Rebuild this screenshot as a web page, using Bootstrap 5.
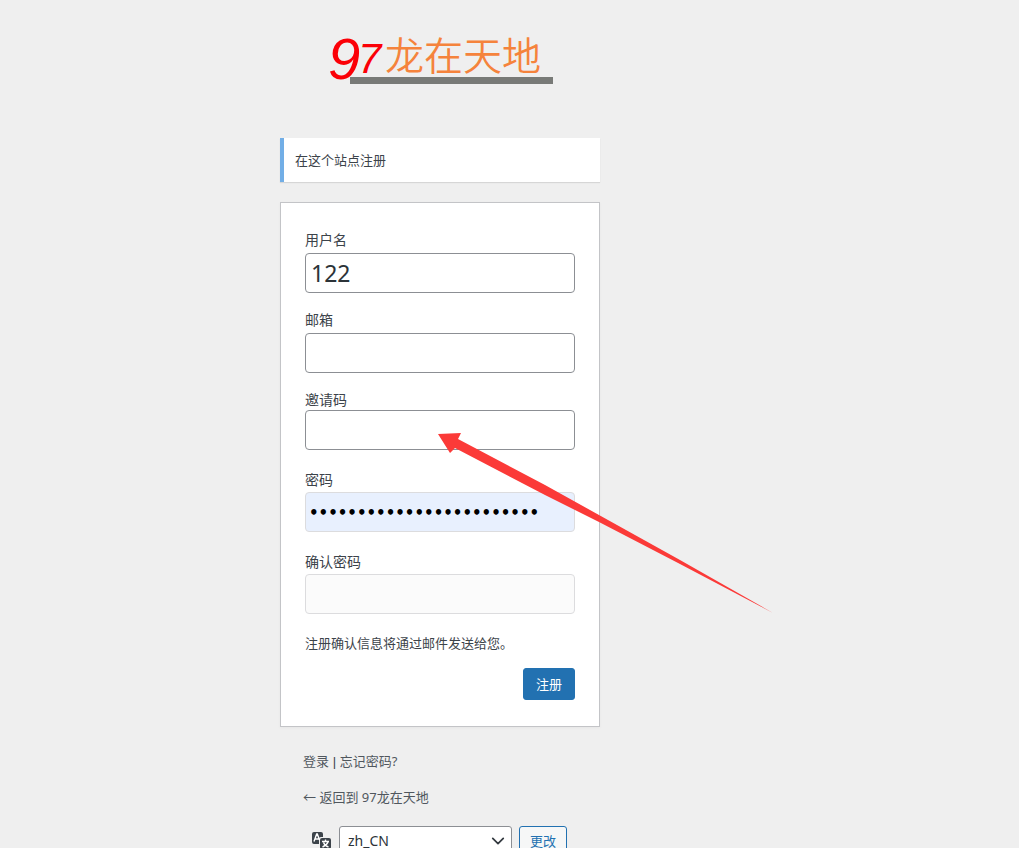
<!DOCTYPE html>
<html lang="zh-CN">
<head>
<meta charset="utf-8">
<meta name="viewport" content="width=device-width, initial-scale=1">
<title>注册 - 97龙在天地</title>
<link href="https://cdn.jsdelivr.net/npm/bootstrap@5.3.0/dist/css/bootstrap.min.css" rel="stylesheet">
<style>
  body { background: #efefef; color: #3c434a; font: 13px/20px "Noto Sans", "Noto Sans CJK SC", sans-serif; }
  .page { padding: 32px 139px 0 0; }
  .login { width: 320px; }
  .logo { height: 52px; margin: 0 24px 54px 48px; }
  .logo-nine, .logo-seven { color: #fb0007; font-family: "Liberation Sans", sans-serif; font-style: italic; }
  .logo-nine { font-size: 58px; line-height: 54px; width: 30px; }
  .logo-seven { font-size: 42px; line-height: 54px; width: 27px; }
  .logo-name { color: #f5833c; font-family: "Noto Sans CJK SC", sans-serif; font-weight: 350; font-size: 39px; line-height: 42px; }
  .logo-bar { height: 7px; left: 22px; right: 23px; bottom: 0; background: #787a77; z-index: -1; }
  .notice { border-left: 4px solid #72aee6; padding: 12px 11px; box-shadow: 0 1px 1px rgba(0,0,0,.1); }
  .signup { margin-top: 20px; padding: 27px 24px 26px; border: 1px solid #c3c4c7; box-shadow: 0 1px 3px rgba(0,0,0,.04); }
  .signup label { font-size: 14px; line-height: 20px; }
  .signup .form-control { height: 40px; padding: 0 5px; border-color: #8c8f94; border-radius: 4px; color: #2c3338; font-size: 23px; line-height: 32px; }
  .signup .filled { background: #e8f0fe; border-color: #dcdcde; color: #000; font-family: "DejaVu Sans", sans-serif; font-weight: 700; font-size: 15px; padding: 2px 3px 0; }
  .signup .empty { background: #fbfbfb; border-color: #dcdcde; }
  .wide-gap { gap: 3px; margin-bottom: 17px; }
  .no-gap { margin-bottom: 20px; }
  .slim-gap { gap: 2px; margin-bottom: 20px; }
  .hint { margin-top: -1px; }
  .btn { --bs-btn-font-size: 13px; --bs-btn-line-height: 20px; --bs-btn-border-radius: 3px; }
  .btn-send { --bs-btn-padding-x: 12px; --bs-btn-padding-y: 5px; --bs-btn-bg: #2271b1; --bs-btn-border-color: #2271b1; margin-top: 15px; }
  .btn-change { --bs-btn-padding-x: 10px; --bs-btn-padding-y: 4px; --bs-btn-bg: #f6f7f7; --bs-btn-color: #2271b1; --bs-btn-border-color: #2271b1; }
  .foot-links { padding: 0 23px; margin-top: 24px; gap: 15px; }
  .foot-links a { color: #50575e; }
  .divider { font-family: "Liberation Sans", sans-serif; }
  .language { margin: 19px 33px 24px 31px; gap: 7px; }
  .language .form-select { height: 30px; padding: 0 24px 0 8px; border-color: #8c8f94; border-radius: 3px; color: #2c3338; font-size: 14px; line-height: 28px; background-position: right 6px center; background-size: 14px 14px; }
  .pointer { left: 157px; top: 230px; }
</style>
</head>
<body class="vh-100 overflow-hidden">
<main class="page">
  <div class="login mx-auto">
    <a href="#" class="logo d-flex position-relative text-decoration-none z-1" aria-label="97龙在天地">
      <span class="logo-nine">9</span><span class="logo-seven">7</span><span class="logo-name">龙在天地</span>
      <span class="logo-bar position-absolute"></span>
    </a>
    <div class="notice bg-white"><p class="mb-0">在这个站点注册</p></div>
    <form class="signup bg-white position-relative">
      <div class="d-flex flex-column wide-gap">
        <label for="user">用户名</label>
        <input id="user" type="text" class="form-control" value="122">
      </div>
      <div class="d-flex flex-column wide-gap">
        <label for="email">邮箱</label>
        <input id="email" type="email" class="form-control">
      </div>
      <div class="d-flex flex-column no-gap">
        <label for="invite">邀请码</label>
        <input id="invite" type="text" class="form-control">
      </div>
      <div class="d-flex flex-column slim-gap">
        <label for="pass">密码</label>
        <input id="pass" type="password" class="form-control filled" value="abcdefghijklmnopqrstuvwx">
      </div>
      <div class="d-flex flex-column slim-gap">
        <label for="confirm">确认密码</label>
        <input id="confirm" type="password" class="form-control empty">
      </div>
      <p class="hint mb-0">注册确认信息将通过邮件发送给您。</p>
      <div class="d-flex justify-content-end"><button type="button" class="btn btn-primary btn-send">注册</button></div>
      <svg class="pointer position-absolute pe-none" width="336" height="182" viewBox="0 0 336 182" aria-hidden="true">
        <path fill="#fb3a38" d="M0 1 23 0 20 6 107 52 161 82 242 127 335 180 242 131 161 89 107 62 17 15 12 20Z"/>
      </svg>
    </form>
    <nav class="foot-links d-flex flex-column">
      <div><a href="#" class="text-decoration-none">登录</a><span class="divider"> | </span><a href="#" class="text-decoration-none">忘记密码?</a></div>
      <div><a href="#" class="text-decoration-none">← 返回到 97龙在天地</a></div>
    </nav>
    <form class="language d-flex align-items-center">
      <label for="lang" aria-label="语言">
        <svg class="d-block" width="21" height="20" viewBox="0 0 21 20" fill="none">
          <path fill="#3c434a" d="M3 1h7q2 0 2 2v3H10q-2 0-2 2v5H3q-2 0-2-2V3q0-2 2-2Z"/>
          <rect x="9" y="7" width="11" height="11" rx="2" fill="#3c434a"/>
          <path stroke="#fff" stroke-width="1.400" d="m3 10.500 2.700-7.500h.6l2.200 6M4 8h3.500M11 10.500h7M14.500 8.500v2M11.500 16q4.500-2 5.500-5M12.500 11.500q1.500 3.500 5 4.500"/>
        </svg>
      </label>
      <select id="lang" class="form-select"><option>zh_CN</option></select>
      <button type="button" class="btn btn-change flex-shrink-0">更改</button>
    </form>
  </div>
</main>
<script src="https://cdn.jsdelivr.net/npm/bootstrap@5.3.0/dist/js/bootstrap.bundle.min.js"></script>
</body>
</html>
